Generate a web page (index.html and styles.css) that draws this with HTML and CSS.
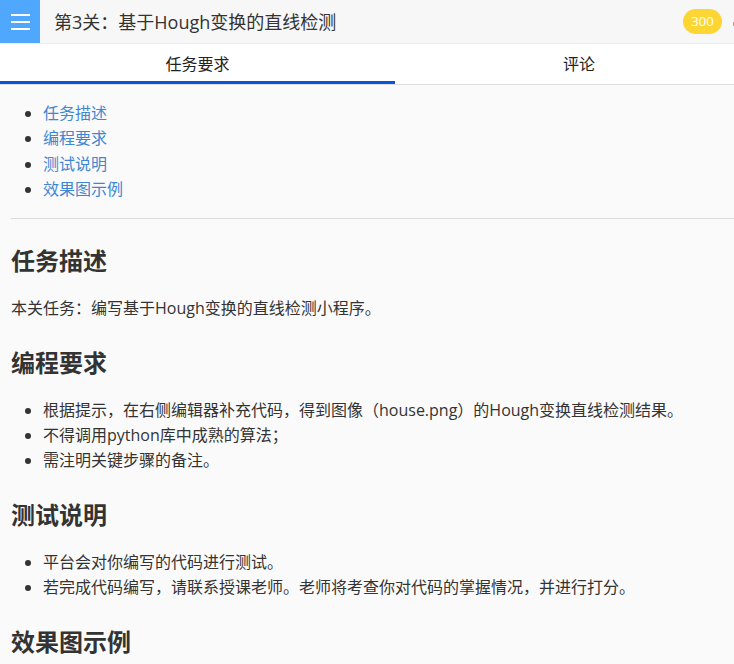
FILE: index.html
```html
<!DOCTYPE html>
<html lang="zh-CN">
<head>
<meta charset="utf-8">
<title>第3关：基于Hough变换的直线检测</title>
<link rel="stylesheet" href="styles.css">
</head>
<body>
<div class="page">
  <header class="header">
    <button class="menu-btn" aria-label="菜单">
      <span class="bar"></span><span class="bar"></span><span class="bar"></span>
    </button>
    <div class="title">第3关：基于Hough变换的直线检测</div>
    <span class="badge">300</span>
    <span class="edge-mark"></span>
  </header>
  <nav class="tabs">
    <div class="tab tab-active">任务要求</div>
    <div class="tab tab-second">评论</div>
  </nav>
  <main class="content">
    <ul class="toc">
      <li><a href="#d">任务描述</a></li>
      <li><a href="#r">编程要求</a></li>
      <li><a href="#t">测试说明</a></li>
      <li><a href="#e">效果图示例</a></li>
    </ul>
    <hr class="divider">
    <h2 id="d">任务描述</h2>
    <p>本关任务：编写基于Hough变换的直线检测小程序。</p>
    <h2 id="r">编程要求</h2>
    <ul class="list">
      <li>根据提示，在右侧编辑器补充代码，得到图像（house.png）的Hough变换直线检测结果。</li>
      <li>不得调用python库中成熟的算法；</li>
      <li>需注明关键步骤的备注。</li>
    </ul>
    <h2 id="t">测试说明</h2>
    <ul class="list">
      <li>平台会对你编写的代码进行测试。</li>
      <li>若完成代码编写，请联系授课老师。老师将考查你对代码的掌握情况，并进行打分。</li>
    </ul>
    <h2 id="e">效果图示例</h2>
  </main>
</div>
</body>
</html>
```
FILE: styles.css
```css
html, body {
  margin: 0;
  padding: 0;
}
body {
  background: #fafafa;
  font-family: "Open Sans", "Noto Sans CJK SC", sans-serif;
  color: #333;
  overflow: hidden;
}
.page {
  width: 734px;
  overflow: hidden;
}
.header {
  display: flex;
  align-items: center;
  height: 43px;
  background: #f7f7f7;
  border-bottom: 1px solid #ececec;
  width: 780px;
}
.menu-btn {
  flex: 0 0 40px;
  height: 43px;
  border: 0;
  padding: 0;
  margin: 0;
  background: #4fa8fd;
  display: flex;
  flex-direction: column;
  align-items: center;
  justify-content: center;
  gap: 5px;
}
.bar {
  display: block;
  width: 19px;
  height: 2px;
  background: #fff;
}
.title {
  margin-left: 14px;
  font-size: 18px;
  line-height: 24px;
  color: #333;
  flex: 1 1 auto;
}
.badge {
  width: 39px;
  height: 25px;
  border-radius: 13px;
  background: #fed634;
  color: #fff;
  font-size: 13px;
  line-height: 25px;
  text-align: center;
  flex: 0 0 auto;
}
.edge-mark {
  flex: 0 0 auto;
  width: 10px;
  height: 4px;
  margin-left: 11px;
  margin-right: 37px;
  margin-top: 5px;
  background: #ef9a3c;
  border-radius: 1px;
}
.tabs {
  display: flex;
  height: 40px;
  background: #fff;
  border-bottom: 1px solid #dedede;
  width: 780px;
}
.tab {
  box-sizing: border-box;
  height: 40px;
  padding-top: 1px;
  display: flex;
  align-items: center;
  justify-content: center;
  font-size: 16px;
  color: #222;
  border-bottom: 3px solid transparent;
  flex: 0 0 auto;
}
.tab-active {
  width: 395px;
  border-bottom-color: #0a55d6;
}
.tab-second {
  width: 368px;
}
.content {
  padding: 0 0 0 11px;
  font-size: 16px;
}
.toc, .list {
  margin: 16px 0;
  padding-left: 32px;
  line-height: 25.3px;
}
.toc a {
  color: #3f86d3;
  text-decoration: none;
}
.divider {
  margin: 0;
  border: 0;
  border-top: 1px solid #dcdcdc;
  height: 0;
}
h2 {
  font-size: 24px;
  font-weight: 700;
  line-height: 36px;
  margin: 24px 0 17px;
  color: #333;
}
p {
  margin: 16px 0;
  line-height: 25px;
}
.list {
  line-height: 25px;
}
```
